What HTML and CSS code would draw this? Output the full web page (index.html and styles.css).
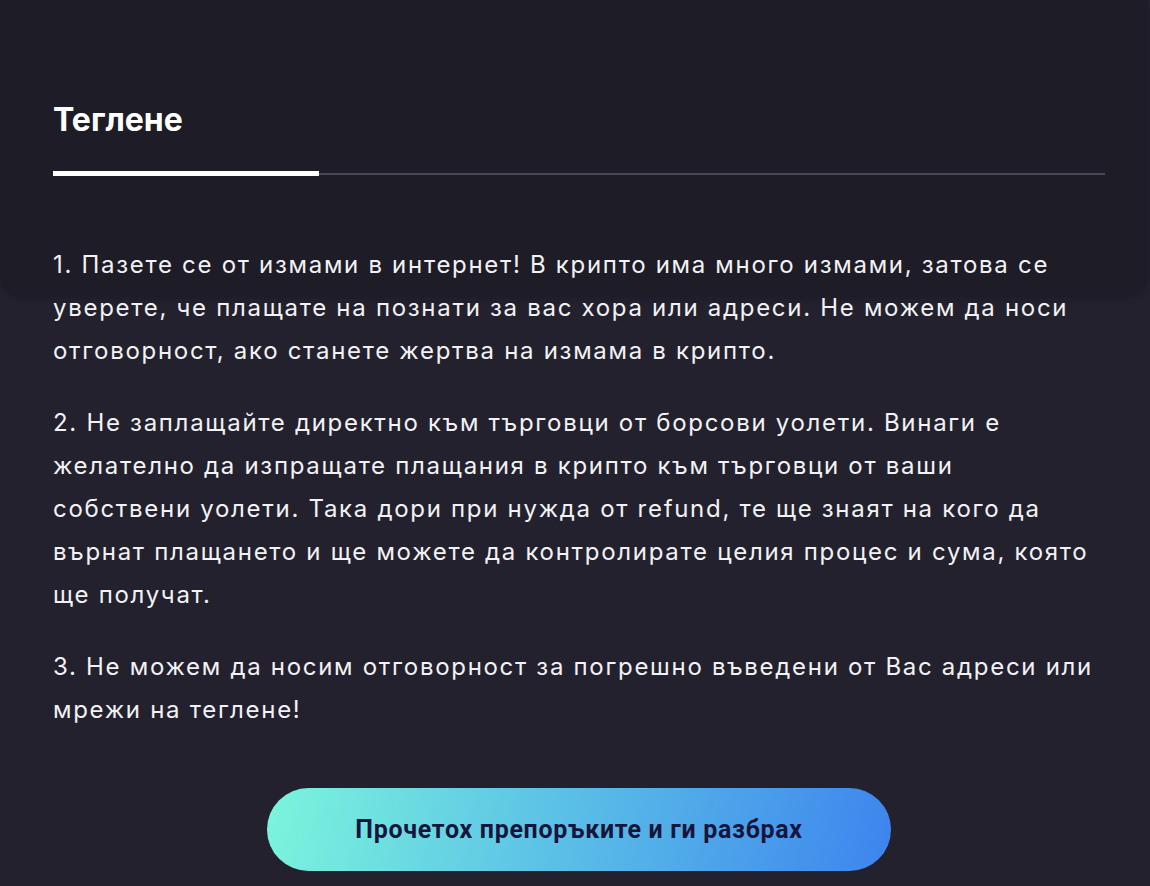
FILE: index.html
```html
<!DOCTYPE html>
<html>
<head>
  <meta charset="utf-8">
  <link rel="stylesheet" href="styles.css">
</head>
<body>
  <div class="sheet">
    <h2 class="title">Теглене</h2>
    <div class="progress">
      <div class="progress-fill"></div>
    </div>
    <div class="notes">
      <p>1. Пазете се от измами в интернет! В крипто има много измами, затова се уверете, че плащате на познати за вас хора или адреси. Не можем да носи отговорност, ако станете жертва на измама в крипто.</p>
      <p>2. Не заплащайте директно към търговци от борсови уолети. Винаги е желателно да изпращате плащания в крипто към търговци от ваши собствени уолети. Така дори при нужда от refund, те ще знаят на кого да върнат плащането и ще можете да контролирате целия процес и сума, която ще получат.</p>
      <p>3. Не можем да носим отговорност за погрешно въведени от Вас адреси или мрежи на теглене!</p>
    </div>
    <div class="actions">
      <button class="confirm">Прочетох препоръките и ги разбрах</button>
    </div>
  </div>
</body>
</html>
```

FILE: styles.css
```css
body {
  margin: 0;
  background-color: #23212e;
  font-family: "Inter", "Noto Sans", sans-serif;
  color: #ffffff;
}

.sheet {
  position: relative;
  padding: 0 45px 0 53px;
}

/* darker top panel, sits behind the title and first lines */
.sheet::before {
  content: "";
  position: absolute;
  top: 0;
  left: 0;
  right: 2px;
  height: 297px;
  background-color: #1e1c26;
  border-radius: 0 0 22px 22px;
  box-shadow: 0 2px 6px rgba(0, 0, 0, 0.15);
}

.title,
.progress,
.notes,
.actions {
  position: relative;
}

.title {
  margin: 0;
  padding-top: 100px;
  font-size: 32px;
  line-height: 40px;
  font-weight: 700;
}

.progress {
  margin-top: 33px;
  height: 2px;
  background-color: #4a4855;
}

.progress-fill {
  position: absolute;
  top: -2px;
  left: 0;
  width: 266px;
  height: 5px;
  background-color: #ffffff;
}

.notes {
  padding-top: 68px;
  padding-right: 8px;
}

.notes p {
  margin: 0 0 29px;
  font-size: 24px;
  line-height: 43px;
  letter-spacing: 1.7px;
  color: #f2f2f4;
}

.actions {
  display: flex;
  justify-content: center;
  padding-top: 28px;
}

.confirm {
  width: 624px;
  height: 83px;
  border: none;
  border-radius: 42px;
  background: linear-gradient(100deg, #7bf5dc 0%, #5cc2e6 45%, #3d84ee 100%);
  color: #18153d;
  font-family: "Roboto", sans-serif;
  font-size: 25px;
  letter-spacing: 0.7px;
  font-weight: 700;
  cursor: pointer;
}
```
